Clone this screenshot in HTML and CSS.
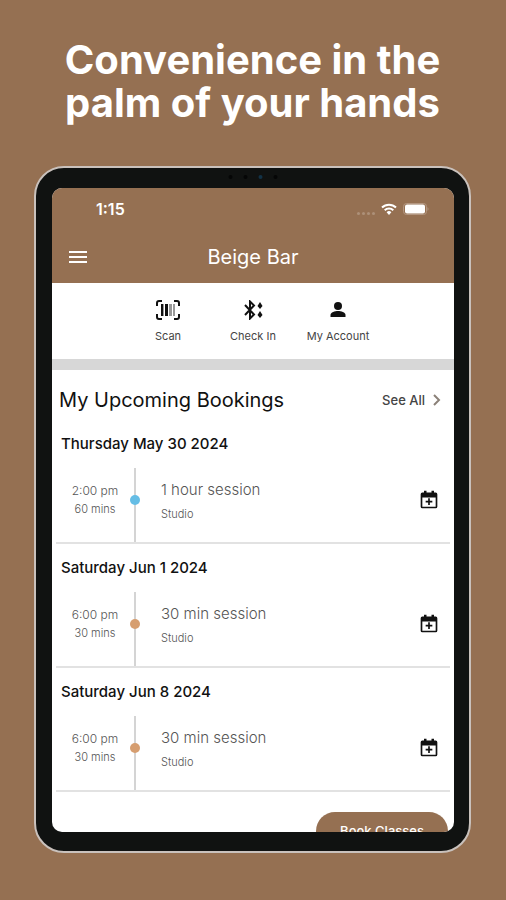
FILE: index.html
```html
<!DOCTYPE html>
<html lang="en">
<head>
<meta charset="utf-8">
<meta name="viewport" content="width=device-width, initial-scale=1">
<title>Beige Bar</title>
<link rel="stylesheet" href="styles.css">
</head>
<body>
<svg class="sprite" aria-hidden="true">
  <symbol id="calendar-add" viewBox="0 0 24 24">
    <path fill-rule="evenodd" d="M6 1v2H4a2 2 0 0 0-2 2v15a2 2 0 0 0 2 2h16a2 2 0 0 0 2-2V5a2 2 0 0 0-2-2h-2V1h-3v2H9V1zM4 9h16v11H4z"/>
    <path d="M11 10h2v3h3v2h-3v3h-2v-3H8v-2h3z"/>
  </symbol>
</svg>
<h1 class="headline">Convenience in the<br>palm of your hands</h1>
<main class="device">
  <span class="camera" aria-hidden="true"><i></i><i></i><i class="lens"></i><i></i></span>
  <div class="screen">
    <header class="topbar">
      <div class="status">
        <span class="clock">1:15</span>
        <span class="indicators">
          <span class="signal" aria-hidden="true"><i></i><i></i><i></i><i></i></span>
          <svg class="wifi" viewBox="0 0 16 12" aria-hidden="true">
            <g fill="none" stroke="currentColor" stroke-width="2">
              <path d="M1 4.500a10 10 0 0 1 14 0"/>
              <path d="M3.700 7.300a6.200 6.200 0 0 1 8.600 0"/>
            </g>
            <path fill="currentColor" d="M5.600 9.300a3.400 3.400 0 0 1 4.800 0L8 12z"/>
          </svg>
          <svg class="battery" viewBox="0 0 26 12" aria-hidden="true">
            <rect x=".5" y=".5" width="23" height="11" rx="3" fill="none" stroke="#b39680"/>
            <rect x="2" y="1.500" width="20" height="9" rx="2" fill="#fff"/>
            <path d="M24.500 4v4q2-2 0-4z" fill="#b39680"/>
          </svg>
        </span>
      </div>
      <div class="titlebar">
        <button class="menu" type="button" aria-label="Menu">
          <svg viewBox="0 0 18 14" aria-hidden="true"><path fill="currentColor" d="M0 1h18v2H0zM0 6h18v2H0zM0 11h18v2H0z"/></svg>
        </button>
        <h2>Beige Bar</h2>
      </div>
    </header>
    <nav class="shortcuts">
      <a href="#scan">
        <svg viewBox="0 0 24 20" aria-hidden="true">
          <path fill="none" stroke="currentColor" stroke-width="2" d="M1 6V3q0-2 2-2h3M18 1h3q2 0 2 2v3M1 14v3q0 2 2 2h3M18 19h3q2 0 2-2v-3"/>
          <path fill="currentColor" d="M5 4h2v12H5zM9 4h3v12H9z"/>
          <path fill="#999" d="M7 4h1v12H7zM13 4h3v12h-3zM17 4h2v12h-2z"/>
        </svg>
        Scan
      </a>
      <a href="#check-in">
        <svg viewBox="0 0 24 20" aria-hidden="true">
          <path fill="none" stroke="currentColor" stroke-width="2" d="M4 5l9 9.500-4 4V1.500l4 4L4 15"/>
          <path fill="currentColor" d="M19 2l2.500 4L19 9l-2.500-3zM19 11l2.500 4-2.500 3-2.500-3z"/>
        </svg>
        Check In
      </a>
      <a href="#account">
        <svg viewBox="0 0 24 20" aria-hidden="true">
          <circle cx="12" cy="6" r="4" fill="currentColor"/>
          <path fill="currentColor" d="M4.500 17v-2c0-2.600 4.500-4 7.500-4s7.500 1.400 7.500 4v2z"/>
        </svg>
        My Account
      </a>
    </nav>
    <section class="bookings">
      <div class="bookings-head">
        <h3>My Upcoming Bookings</h3>
        <a class="see-all" href="#all">See All
          <svg viewBox="0 0 8 12" aria-hidden="true"><path fill="none" stroke="#8b8178" stroke-width="2" d="M1 1l5 5-5 5"/></svg>
        </a>
      </div>
      <article class="day">
        <h4>Thursday May 30 2024</h4>
        <div class="booking">
          <p class="time">2:00 pm<small>60 mins</small></p>
          <span class="rail"><i class="dot blue"></i></span>
          <div class="details"><p class="name">1 hour session</p><p class="place">Studio</p></div>
          <button class="add" type="button" aria-label="Add to calendar"><svg aria-hidden="true"><use href="#calendar-add"/></svg></button>
        </div>
      </article>
      <article class="day">
        <h4>Saturday Jun 1 2024</h4>
        <div class="booking">
          <p class="time">6:00 pm<small>30 mins</small></p>
          <span class="rail"><i class="dot"></i></span>
          <div class="details"><p class="name">30 min session</p><p class="place">Studio</p></div>
          <button class="add" type="button" aria-label="Add to calendar"><svg aria-hidden="true"><use href="#calendar-add"/></svg></button>
        </div>
      </article>
      <article class="day">
        <h4>Saturday Jun 8 2024</h4>
        <div class="booking">
          <p class="time">6:00 pm<small>30 mins</small></p>
          <span class="rail"><i class="dot"></i></span>
          <div class="details"><p class="name">30 min session</p><p class="place">Studio</p></div>
          <button class="add" type="button" aria-label="Add to calendar"><svg aria-hidden="true"><use href="#calendar-add"/></svg></button>
        </div>
      </article>
    </section>
    <footer class="actions"><button class="book" type="button">Book Classes</button></footer>
  </div>
</main>
</body>
</html>
```

FILE: styles.css
```css
:root {
  --brand: #957052;
  --line: #d4d4d4;
}

* { box-sizing: border-box; }

body {
  margin: 0;
  padding: 38px 35px 46px 34px;
  min-height: 100vh;
  background: var(--brand);
  font-family: Inter, "Liberation Sans", sans-serif;
  color: #111;
}

h1, h2, h3, h4, p { margin: 0; font-weight: 400; }
button { border: 0; padding: 0; background: none; color: inherit; font: inherit; }
a { color: inherit; text-decoration: none; }
svg { display: block; }
.sprite { position: absolute; width: 0; height: 0; }

.headline {
  margin-bottom: 42px;
  color: #fff;
  font-size: 40px;
  line-height: 43px;
  font-weight: 700;
  text-align: center;
  white-space: nowrap;
}

/* Tablet frame */
.device {
  position: relative;
  padding: 20px 15px 19px 16px;
  border: 2px solid #c9c1bc;
  border-radius: 30px;
  background: #101211;
}

.camera {
  position: absolute;
  top: 7px;
  left: 50%;
  display: flex;
  gap: 11px;
  translate: -50%;
}
.camera i { width: 4px; height: 4px; border-radius: 50%; background: #050606; }
.camera .lens { background: #123247; }

.screen {
  overflow: hidden;
  border-radius: 10px;
  background: #fff;
}

.topbar { background: var(--brand); color: #fff; }
.status {
  display: flex;
  align-items: center;
  justify-content: space-between;
  height: 42px;
  padding: 0 25px 0 44px;
}
.clock { font-size: 16px; font-weight: 600; }
.indicators { display: flex; align-items: center; gap: 6px; }
.signal { display: flex; gap: 2px; padding-top: 8px; }
.signal i { width: 3px; height: 3px; border-radius: 50%; background: #ad9079; }
.wifi { width: 16px; height: 12px; }
.battery { width: 26px; height: 12px; }

.titlebar {
  display: grid;
  grid-template-columns: 52px 1fr 52px;
  align-items: center;
  height: 53px;
}
.menu { justify-self: center; }
.menu svg { width: 18px; height: 14px; }
.titlebar h2 { font-size: 20px; text-align: center; }

.shortcuts {
  display: flex;
  justify-content: center;
  height: 76px;
  padding-top: 17px;
}
.shortcuts a {
  display: flex;
  flex-direction: column;
  align-items: center;
  gap: 8px;
  width: 85px;
  font-size: 11px;
  line-height: 16px;
  color: #444;
}
.shortcuts svg { width: 24px; height: 20px; color: #111; }

.bookings { border-top: 11px solid #d7d7d7; }
.bookings-head {
  display: flex;
  align-items: center;
  justify-content: space-between;
  height: 60px;
  padding: 0 13px 0 7px;
}
.bookings-head h3 { font-size: 20px; }
.see-all {
  display: flex;
  align-items: center;
  gap: 8px;
  font-size: 13px;
  font-weight: 500;
  color: #444;
}
.see-all svg { width: 8px; height: 12px; }

.day { margin: 0 4px; border-bottom: 2px solid #e2e2e2; }
.day + .day { padding-top: 10px; }
.day h4 {
  padding: 3px 5px 13px;
  font-size: 15px;
  line-height: 22px;
  font-weight: 500;
}
.booking {
  display: grid;
  grid-template-columns: 74px 10px 1fr 42px;
  align-items: center;
  height: 74px;
  color: #555;
}
.time {
  padding: 0 0 10px 4px;
  font-size: 12px;
  line-height: 18px;
  font-weight: 300;
  text-align: center;
}
.time small { display: block; font-size: 11px; }
.rail {
  display: grid;
  place-items: center;
  height: 100%;
  background: linear-gradient(var(--line), var(--line)) center / 2px 100% no-repeat;
}
.dot { width: 10px; height: 10px; margin-top: -10px; border-radius: 50%; background: #d69e70; }
.dot.blue { background: #65bde5; }
.details { padding: 0 0 6px 21px; }
.name { font-size: 15px; line-height: 24px; font-weight: 300; }
.place { font-size: 11px; line-height: 24px; font-weight: 300; }
.add { justify-self: center; padding-bottom: 10px; color: #111; }
.add svg { width: 20px; height: 20px; fill: currentColor; }

.actions {
  display: flex;
  justify-content: flex-end;
  align-items: flex-start;
  height: 40px;
  padding: 20px 6px 0 0;
}
.book {
  flex: none;
  width: 132px;
  height: 38px;
  border-radius: 19px;
  background: var(--brand);
  color: #fff;
  font-size: 13px;
  font-weight: 500;
}
```
